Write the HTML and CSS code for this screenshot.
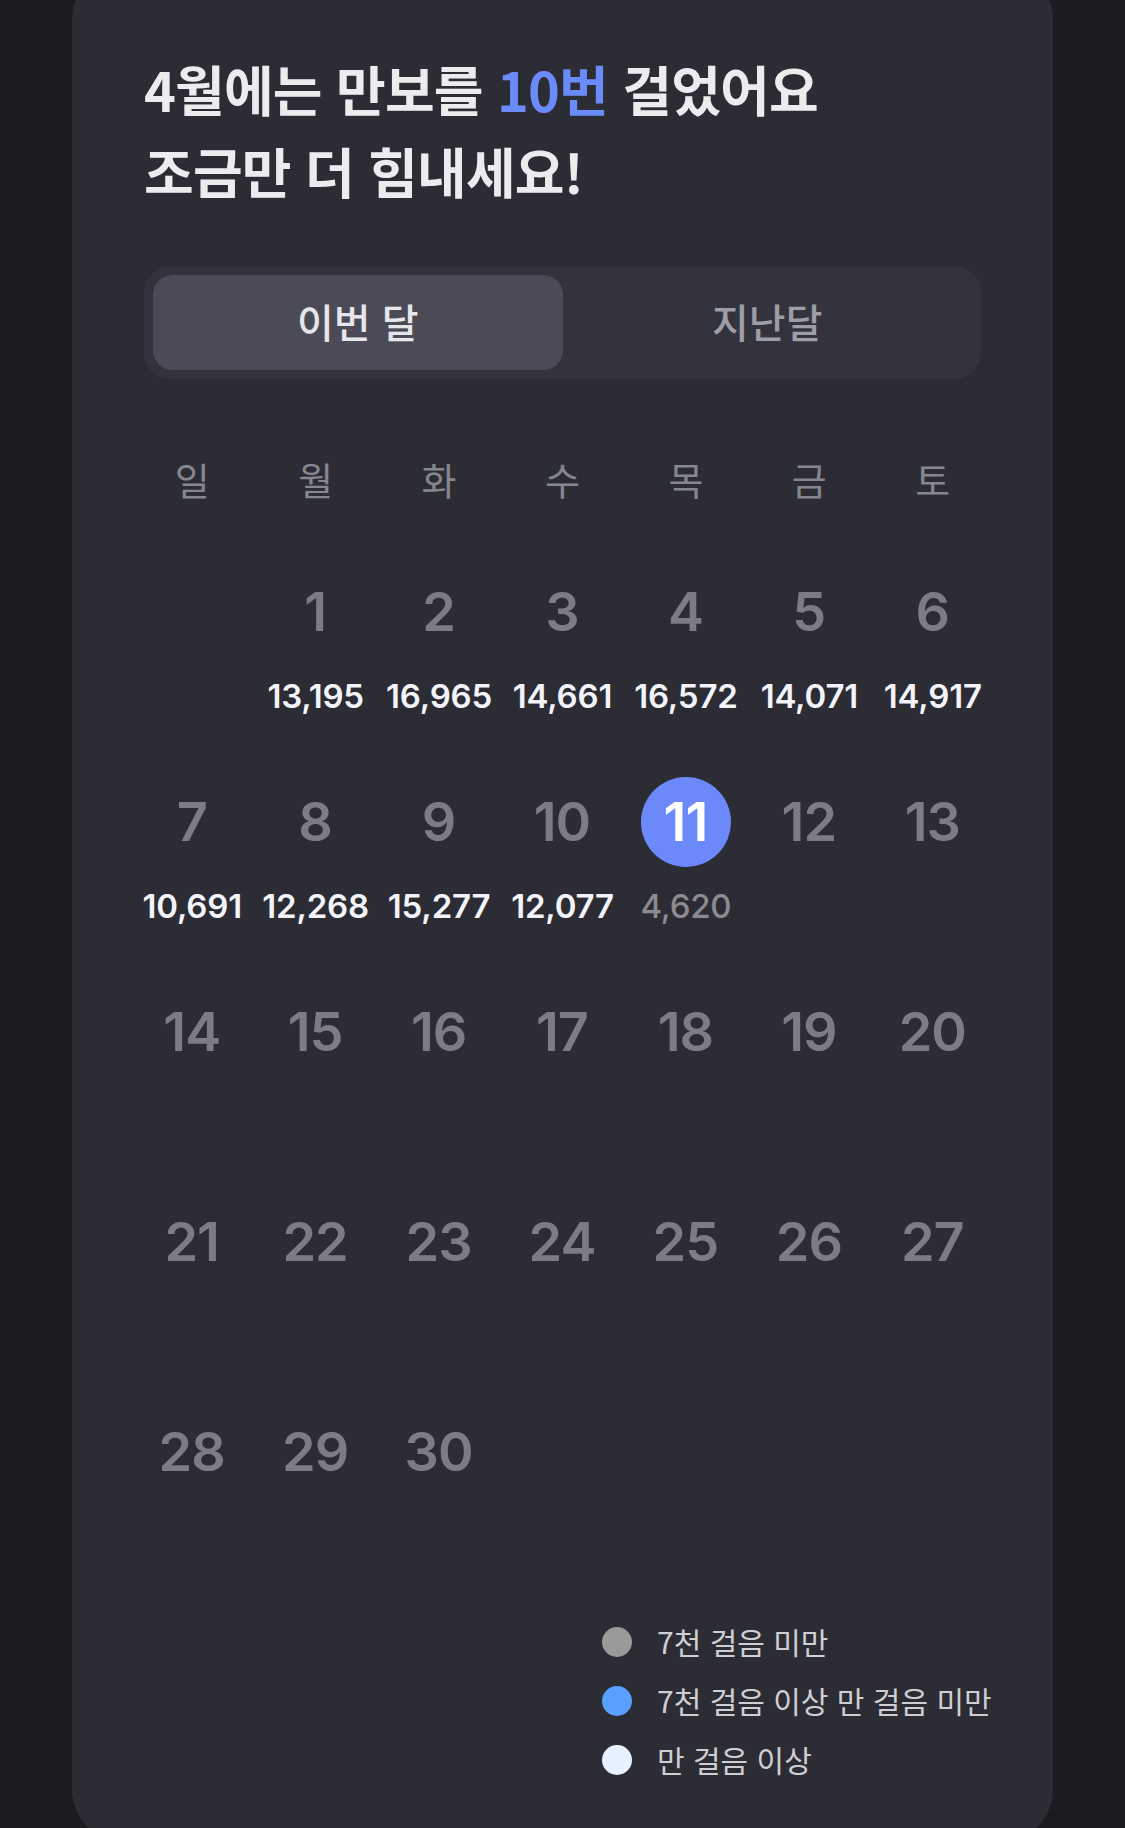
FILE: index.html
```html
<!DOCTYPE html>
<html lang="ko">
<head>
<meta charset="utf-8">
<title>만보 달력</title>
<link rel="stylesheet" href="styles.css">
</head>
<body>
<main class="card">
  <h1 class="title">4월에는 만보를 <span class="accent">10번</span> 걸었어요<br>조금만 더 힘내세요!</h1>

  <div class="segment">
    <button class="seg-btn is-active">이번 달</button>
    <button class="seg-btn">지난달</button>
  </div>

  <div class="weekdays">
    <span>일</span><span>월</span><span>화</span><span>수</span><span>목</span><span>금</span><span>토</span>
  </div>

  <div class="days">
    <div class="cell"></div>
    <div class="cell"><span class="num">1</span><span class="steps">13,195</span></div>
    <div class="cell"><span class="num">2</span><span class="steps">16,965</span></div>
    <div class="cell"><span class="num">3</span><span class="steps">14,661</span></div>
    <div class="cell"><span class="num">4</span><span class="steps">16,572</span></div>
    <div class="cell"><span class="num">5</span><span class="steps">14,071</span></div>
    <div class="cell"><span class="num">6</span><span class="steps">14,917</span></div>

    <div class="cell"><span class="num">7</span><span class="steps">10,691</span></div>
    <div class="cell"><span class="num">8</span><span class="steps">12,268</span></div>
    <div class="cell"><span class="num">9</span><span class="steps">15,277</span></div>
    <div class="cell"><span class="num">10</span><span class="steps">12,077</span></div>
    <div class="cell"><span class="num is-today">11</span><span class="steps is-low">4,620</span></div>
    <div class="cell"><span class="num">12</span></div>
    <div class="cell"><span class="num">13</span></div>

    <div class="cell"><span class="num">14</span></div>
    <div class="cell"><span class="num">15</span></div>
    <div class="cell"><span class="num">16</span></div>
    <div class="cell"><span class="num">17</span></div>
    <div class="cell"><span class="num">18</span></div>
    <div class="cell"><span class="num">19</span></div>
    <div class="cell"><span class="num">20</span></div>

    <div class="cell"><span class="num">21</span></div>
    <div class="cell"><span class="num">22</span></div>
    <div class="cell"><span class="num">23</span></div>
    <div class="cell"><span class="num">24</span></div>
    <div class="cell"><span class="num">25</span></div>
    <div class="cell"><span class="num">26</span></div>
    <div class="cell"><span class="num">27</span></div>

    <div class="cell"><span class="num">28</span></div>
    <div class="cell"><span class="num">29</span></div>
    <div class="cell"><span class="num">30</span></div>
  </div>

  <ul class="legend">
    <li><span class="dot dot-gray"></span>7천 걸음 미만</li>
    <li><span class="dot dot-blue"></span>7천 걸음 이상 만 걸음 미만</li>
    <li><span class="dot dot-white"></span>만 걸음 이상</li>
  </ul>
</main>
</body>
</html>
```

FILE: styles.css
```css
html, body {
  margin: 0;
  padding: 0;
  overflow: hidden;
}

body {
  width: 1125px;
  height: 1828px;
  background: #1b1b20;
  font-family: "Noto Sans CJK KR", "Noto Sans", sans-serif;
}

.card {
  box-sizing: border-box;
  margin: -34px 72px 0;
  min-height: 1877px;
  padding: 82px 72px 0;
  background: #2c2c35;
  border-radius: 54px;
  display: flex;
  flex-direction: column;
}

.title {
  margin: 0;
  font-size: 54px;
  line-height: 82px;
  font-weight: 700;
  letter-spacing: -0.8px;
  color: #ececef;
}

.accent {
  color: #6b8bfa;
}

.segment {
  margin-top: 54px;
  box-sizing: border-box;
  height: 113px;
  padding: 9px;
  display: flex;
  background: #33333d;
  border-radius: 26px;
}

.seg-btn {
  flex: 1;
  border: 0;
  background: transparent;
  border-radius: 20px;
  font-family: "Noto Sans CJK KR", sans-serif;
  font-size: 40px;
  font-weight: 500;
  color: #9d9da6;
  padding: 0 0 4px;
}

.seg-btn.is-active {
  background: #4b4b57;
  color: #e6e6ea;
}

.weekdays {
  margin: 75px -13.5px 0;
  display: grid;
  grid-template-columns: repeat(7, 1fr);
  font-size: 38px;
  line-height: 50px;
  font-weight: 400;
  color: #86868f;
  text-align: center;
}

.days {
  margin: 63px -13.5px 0;
  display: grid;
  grid-template-columns: repeat(7, 1fr);
  grid-auto-rows: 149px;
  row-gap: 61px;
}

.cell {
  display: flex;
  flex-direction: column;
  align-items: center;
}

.num {
  width: 90px;
  height: 90px;
  border-radius: 50%;
  display: flex;
  align-items: center;
  justify-content: center;
  font-family: Inter, "Liberation Sans", sans-serif;
  font-size: 54px;
  line-height: 90px;
  font-weight: 600;
  letter-spacing: -1px;
  text-indent: -1px;
  color: #7c7c86;
}

.num.is-today {
  background: #6b89fb;
  color: #ffffff;
}

.steps {
  margin-top: 19px;
  font-family: Inter, "Liberation Sans", sans-serif;
  font-size: 33px;
  line-height: 40px;
  font-weight: 600;
  letter-spacing: -0.2px;
  color: #f2f4fa;
  white-space: nowrap;
}

.steps.is-low {
  color: #8b8b90;
  font-weight: 500;
}

.legend {
  list-style: none;
  margin: 56px 0 0 458px;
  padding: 0;
  font-size: 30px;
  line-height: 59px;
  color: #cfcfd3;
  letter-spacing: 0;
  white-space: nowrap;
}

.legend li {
  display: flex;
  align-items: center;
}

.dot {
  width: 30px;
  height: 30px;
  border-radius: 50%;
  margin-right: 25px;
  flex: none;
}

.dot-gray { background: #9a9a9a; }
.dot-blue { background: #5aa0ff; }
.dot-white { background: #e8f1ff; }
```
